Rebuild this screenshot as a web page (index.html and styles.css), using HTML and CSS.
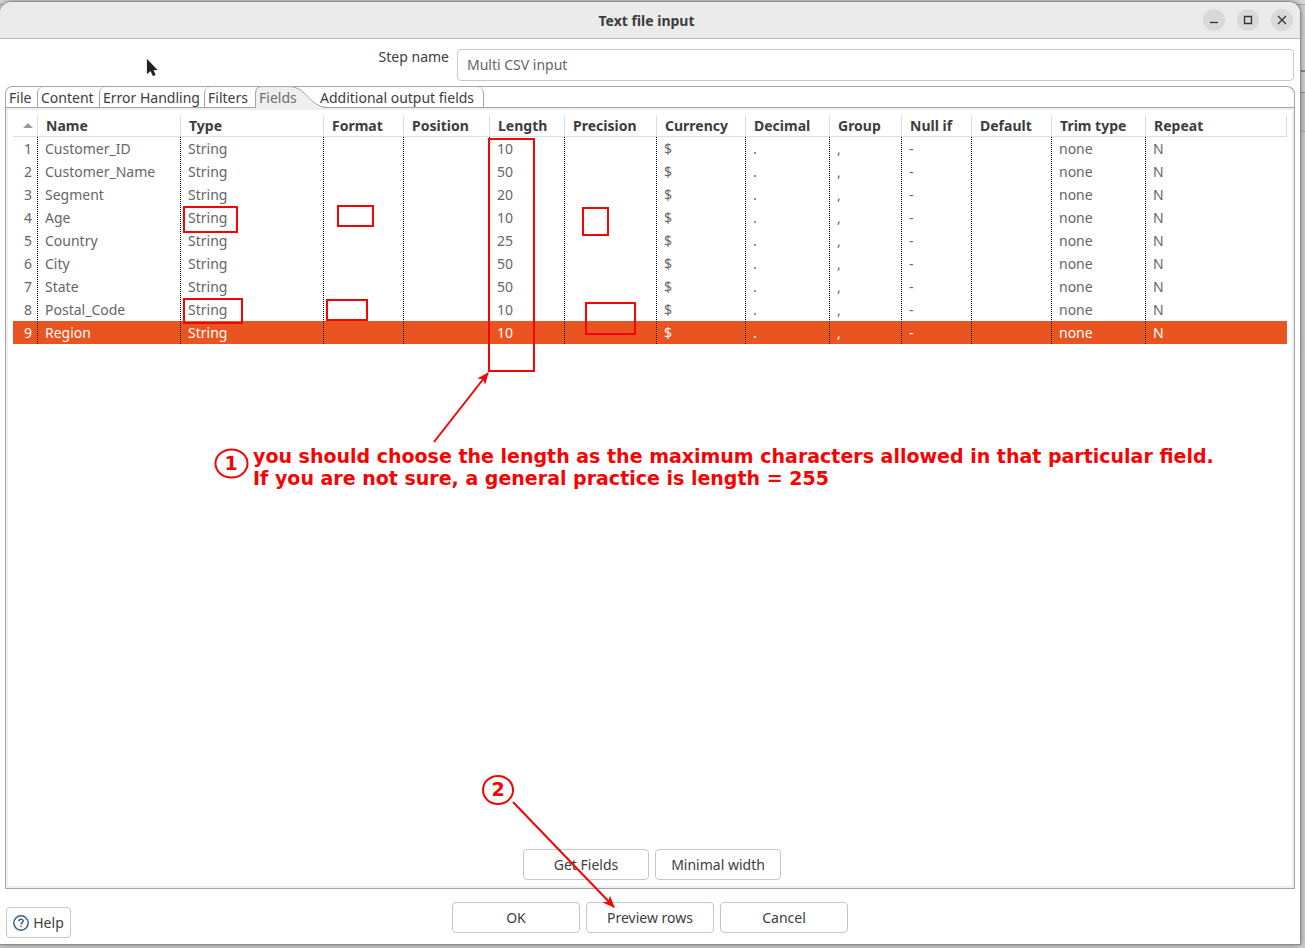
FILE: index.html
```html
<!DOCTYPE html>
<html lang="en">
<head>
<meta charset="utf-8">
<title>Text file input</title>
<link rel="stylesheet" href="styles.css">
</head>
<body>
<div class="window">
  <header class="titlebar">
    <h1 class="title">Text file input</h1>
    <div class="controls">
      <button class="control" type="button" aria-label="Minimize"><svg viewBox="0 0 22 22"><path d="M7 13.5h8"/></svg></button>
      <button class="control" type="button" aria-label="Maximize"><svg viewBox="0 0 22 22"><path d="M7.500 7.500h7v7h-7z"/></svg></button>
      <button class="control" type="button" aria-label="Close"><svg viewBox="0 0 22 22"><path d="M7 7l8 8M15 7l-8 8"/></svg></button>
    </div>
  </header>

  <div class="step">
    <label class="step-label" for="step">Step name</label>
    <input class="step-input" id="step" type="text" value="Multi CSV input">
  </div>

  <main class="folder">
    <div class="tabs" role="tablist">
      <button class="tab tab-file" role="tab" type="button">File</button>
      <button class="tab tab-content" role="tab" type="button">Content</button>
      <button class="tab tab-errors" role="tab" type="button">Error Handling</button>
      <button class="tab tab-filters" role="tab" type="button">Filters</button>
      <button class="tab tab-active" role="tab" type="button" aria-selected="true"><svg class="tab-shape" viewBox="0 0 72 22"><path class="tab-fill" d="M0 22V7Q1 0 7 0H34C52 0 54 21 70 21.5V22Z"/><path class="tab-line" d="M.5 22V7Q1 .5 7 .5H34C52 .5 54 21 72 21.5"/></svg><span class="tab-text">Fields</span></button>
      <button class="tab tab-extra" role="tab" type="button">Additional output fields</button>
      <span class="tab-rest"></span>
    </div>
    <section class="panel">
      <table class="fields">
        <colgroup><col class="w-num"><col class="w-name"><col class="w-type"><col class="w-format"><col class="w-position"><col class="w-length"><col class="w-precision"><col class="w-currency"><col class="w-decimal"><col class="w-group"><col class="w-null"><col class="w-default"><col class="w-trim"><col></colgroup>
        <thead>
          <tr><th aria-label="Row number"><svg class="sort" viewBox="0 0 10 5"><path d="M0 5L5 0L10 5Z"/></svg></th><th>Name</th><th>Type</th><th>Format</th><th>Position</th><th>Length</th><th>Precision</th><th>Currency</th><th>Decimal</th><th>Group</th><th>Null if</th><th>Default</th><th>Trim type</th><th>Repeat</th></tr>
        </thead>
        <tbody>
          <tr><td>1</td><td>Customer_ID</td><td>String</td><td></td><td></td><td>10</td><td></td><td>$</td><td>.</td><td>,</td><td>-</td><td></td><td>none</td><td>N</td></tr>
          <tr><td>2</td><td>Customer_Name</td><td>String</td><td></td><td></td><td>50</td><td></td><td>$</td><td>.</td><td>,</td><td>-</td><td></td><td>none</td><td>N</td></tr>
          <tr><td>3</td><td>Segment</td><td>String</td><td></td><td></td><td>20</td><td></td><td>$</td><td>.</td><td>,</td><td>-</td><td></td><td>none</td><td>N</td></tr>
          <tr><td>4</td><td>Age</td><td>String</td><td></td><td></td><td>10</td><td></td><td>$</td><td>.</td><td>,</td><td>-</td><td></td><td>none</td><td>N</td></tr>
          <tr><td>5</td><td>Country</td><td>String</td><td></td><td></td><td>25</td><td></td><td>$</td><td>.</td><td>,</td><td>-</td><td></td><td>none</td><td>N</td></tr>
          <tr><td>6</td><td>City</td><td>String</td><td></td><td></td><td>50</td><td></td><td>$</td><td>.</td><td>,</td><td>-</td><td></td><td>none</td><td>N</td></tr>
          <tr><td>7</td><td>State</td><td>String</td><td></td><td></td><td>50</td><td></td><td>$</td><td>.</td><td>,</td><td>-</td><td></td><td>none</td><td>N</td></tr>
          <tr><td>8</td><td>Postal_Code</td><td>String</td><td></td><td></td><td>10</td><td></td><td>$</td><td>.</td><td>,</td><td>-</td><td></td><td>none</td><td>N</td></tr>
          <tr class="selected"><td>9</td><td>Region</td><td>String</td><td></td><td></td><td>10</td><td></td><td>$</td><td>.</td><td>,</td><td>-</td><td></td><td>none</td><td>N</td></tr>
        </tbody>
      </table>
      <div class="panel-actions">
        <button class="button button-panel" type="button">Get Fields</button>
        <button class="button button-panel" type="button">Minimal width</button>
      </div>
    </section>
  </main>

  <footer class="footer">
    <button class="button button-help" type="button"><svg class="help-icon" viewBox="0 0 16 16"><circle cx="8" cy="8" r="7.2"/><path d="M5.9 6.3C5.9 3.6 10.2 3.7 10.2 6.1C10.2 7.6 8 7.6 8 9.4M8 10.7V12"/></svg>Help</button>
    <div class="footer-actions">
      <button class="button button-main" type="button">OK</button>
      <button class="button button-main" type="button">Preview rows</button>
      <button class="button button-main" type="button">Cancel</button>
    </div>
  </footer>
</div>

<svg class="notes" width="1305" height="948" viewBox="0 0 1305 948">
  <defs>
    <marker id="head" viewBox="0 0 12 10" refX="11" refY="5" markerWidth="12" markerHeight="10" markerUnits="userSpaceOnUse" orient="auto"><path class="note-head" d="M0 0L12 5L0 10L3 5Z"/></marker>
  </defs>
  <g class="note-line">
    <rect x="489" y="139" width="45" height="232"/>
    <rect x="184" y="207" width="53" height="25"/>
    <rect x="338" y="206" width="35" height="20"/>
    <rect x="583" y="208" width="25" height="27"/>
    <rect x="184" y="299" width="58" height="24"/>
    <rect x="327" y="300" width="40" height="20"/>
    <rect x="586" y="303" width="49" height="31"/>
    <path d="M434 442L488 373" marker-end="url(#head)"/>
    <path d="M513 802L614 907" marker-end="url(#head)"/>
    <ellipse cx="231.500" cy="463.500" rx="16" ry="14"/>
    <ellipse cx="498" cy="790" rx="15" ry="14"/>
  </g>
  <g class="note-text">
    <text x="231" y="470" text-anchor="middle">1</text>
    <text x="498" y="796" text-anchor="middle">2</text>
  </g>
</svg>
<p class="note-text note-tip">you should choose the length as the maximum characters allowed in that particular field.<br>If you are not sure, a general practice is length = 255</p>

<svg class="cursor" viewBox="0 0 12 19"><path d="M1 1V16L4.500 13L7 18L9.500 17L7.500 12H11.500Z"/></svg>
</body>
</html>
```
FILE: styles.css
```css
* {
  box-sizing: border-box;
}

body {
  margin: 0;
  min-height: 100vh;
  display: flex;
  padding: 1px 4px 3px 0;
  position: relative;
  overflow: hidden;
  color: #3d3d3d;
  font: 14px/20px "Noto Sans", "Open Sans", sans-serif;
  background: linear-gradient(#d8d8d8 4px, #aaa 4px 5px, #d4d4d4 5px 70px, #888 70px 72px, #d6d6d6 72px 92px, #999 92px 93px, #c8c8c8 93px 131px, #aaa 131px 132px, #cfcfcf 132px);
}

button,
input {
  font: inherit;
  color: inherit;
}

.window {
  flex: 1;
  display: flex;
  flex-direction: column;
  background: #fff;
  border: 1px solid #8b8b8b;
  border-left: 0;
  border-radius: 12px 12px 0 0;
  box-shadow: 0 0 6px #0006;
}

.titlebar {
  display: grid;
  grid-template-columns: 1fr auto 1fr;
  align-items: center;
  height: 37px;
  padding-right: 7px;
  border-bottom: 1px solid #b9b9b9;
  border-radius: 12px 12px 0 0;
  background: #ebebeb;
}

.title {
  grid-column: 2;
  margin: 0;
  padding-top: 2px;
  font-size: 14px;
  font-weight: 700;
}

.controls {
  display: flex;
  justify-content: flex-end;
  gap: 12px;
}

.control {
  width: 22px;
  height: 22px;
  padding: 0;
  border: 0;
  border-radius: 50%;
  background: #d9d9d9;
}

.control svg {
  display: block;
  fill: none;
  stroke: #333;
  stroke-width: 1.3;
}

.step {
  display: flex;
  gap: 8px;
  padding: 10px 6px 5px 0;
}

.step-label {
  width: 449px;
  height: 20px;
  margin-top: -2px;
  text-align: right;
}

.step-input {
  flex: 1;
  min-width: 0;
  height: 32px;
  padding: 0 9px 2px;
  border: 1px solid #c8c8c8;
  border-radius: 4px;
  background: #fff;
  color: #666;
}

.folder {
  flex: 1;
  display: flex;
  flex-direction: column;
  margin: 0 5px;
}

.tabs {
  display: flex;
  height: 22px;
  border: 1px solid #a2a6a6;
  border-bottom: 0;
  border-radius: 7px 8px 0 0;
}

.tab {
  flex: none;
  padding: 2px 0 0 3px;
  border: 0;
  border-left: 1px solid #a2a6a6;
  border-bottom: 1px solid #a2a6a6;
  border-top-left-radius: 6px;
  background: none;
  line-height: 18px;
  text-align: left;
  white-space: nowrap;
}

.tab-file {
  width: 31px;
  border-left: 0;
}

.tab-content {
  width: 62px;
}

.tab-errors {
  width: 105px;
}

.tab-filters {
  width: 51px;
}

.tab-active {
  position: relative;
  width: 60px;
  padding: 1px 0 0 4px;
  border: 0;
  color: #6d6d6d;
}

.tab-shape {
  position: absolute;
  left: 0;
  top: -1px;
  width: 72px;
  height: 22px;
}

.tab-fill {
  fill: #efefef;
}

.tab-line {
  fill: none;
  stroke: #a2a6a6;
}

.tab-text {
  position: relative;
}

.tab-extra {
  width: 169px;
  padding-left: 5px;
  border-left: 0;
  border-right: 1px solid #a2a6a6;
  border-radius: 0 6px 0 0;
}

.tab-rest {
  flex: 1;
  border-bottom: 1px solid #a2a6a6;
}

.panel {
  flex: 1;
  display: flex;
  flex-direction: column;
  justify-content: space-between;
  padding: 5px 5px 6px;
  border: 1px solid #a2a6a6;
  border-top: 0;
  box-shadow: inset 0 0 0 2px #efefef;
}

.fields {
  width: calc(100% - 4px);
  margin: 2px 2px 0;
  border-collapse: separate;
  border-spacing: 0;
  table-layout: fixed;
  color: #666;
}

.w-num { width: 25px; }
.w-name, .w-type { width: 143px; }
.w-format, .w-default { width: 80px; }
.w-position { width: 86px; }
.w-length { width: 75px; }
.w-precision { width: 92px; }
.w-currency { width: 89px; }
.w-decimal { width: 84px; }
.w-group { width: 72px; }
.w-null { width: 70px; }
.w-trim { width: 94px; }

.fields th {
  height: 22px;
  padding: 0 0 0 8px;
  border-right: 1px solid #dedede;
  border-bottom: 1px solid #dedede;
  color: #3d3d3d;
  font-weight: 700;
  line-height: 20px;
  text-align: left;
  white-space: nowrap;
}

.fields td {
  height: 23px;
  padding: 0 0 0 7px;
  line-height: 22px;
  white-space: nowrap;
  background: linear-gradient(#000 50%, transparent 50%) right 0 / 1px 2px repeat-y;
}

.fields tr:nth-child(even) td {
  background-position: right 1px;
}

.fields td:first-child {
  padding: 0 6px 0 0;
  text-align: right;
}

.fields td:last-child {
  background: none;
}

.fields th:first-child {
  padding: 0 4px 0 0;
}

.sort {
  display: block;
  width: 10px;
  height: 5px;
  margin-left: auto;
  fill: #999;
}

.selected {
  background: #e95420;
  color: #fff;
}

.panel-actions {
  display: flex;
  justify-content: center;
  gap: 6px;
  padding: 0 0 2px 4px;
}

.button {
  height: 31px;
  padding: 0;
  border: 1px solid #c6c6c6;
  border-radius: 4px;
  background: #fff;
}

.button-panel {
  width: 126px;
}

.button-main {
  width: 128px;
}

.button-help {
  display: flex;
  align-items: center;
  justify-content: center;
  gap: 4px;
  justify-self: start;
  align-self: end;
  width: 65px;
}

.help-icon {
  width: 16px;
  height: 16px;
  fill: none;
  stroke: #3d6080;
  stroke-width: 1.5;
}

.footer {
  display: grid;
  grid-template-columns: 1fr auto 1fr;
  height: 55px;
  padding: 13px 6px 6px;
}

.footer-actions {
  display: flex;
  gap: 6px;
}

.notes {
  position: absolute;
  left: 0;
  top: 0;
  pointer-events: none;
}

.note-line {
  fill: none;
  stroke: #f40505;
  stroke-width: 2;
}

.note-head {
  fill: #f40505;
  stroke: none;
}

.note-text {
  color: #f40505;
  fill: currentColor;
  font: bold 19px/22px "DejaVu Sans", sans-serif;
}

.note-tip {
  position: absolute;
  left: 253px;
  top: 445px;
  margin: 0;
  white-space: nowrap;
}

.cursor {
  position: absolute;
  left: 146px;
  top: 58px;
  width: 12px;
  height: 19px;
  fill: #222;
  stroke: #ddd;
  stroke-width: 1;
  paint-order: stroke;
}
```
